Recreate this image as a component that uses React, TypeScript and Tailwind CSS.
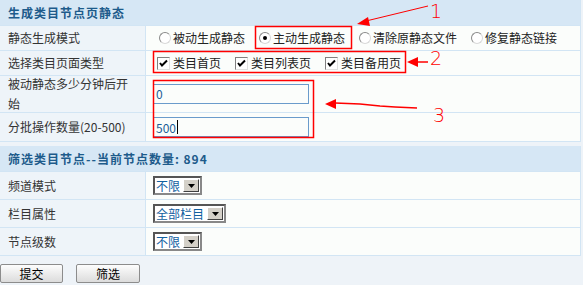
import React from 'react';

const font = { fontFamily: '"Noto Sans CJK SC", "Liberation Sans", sans-serif' };

const Radio = ({ checked, label }: { checked?: boolean; label: string }) => (
  <label className="flex items-center gap-[2px] mr-[14px]">
    <span className="w-[12px] h-[12px] rounded-full bg-white border border-t-[#8a8a8a] border-l-[#8a8a8a] border-r-[#d8d8d8] border-b-[#d8d8d8] flex items-center justify-center">
      {checked && <span className="w-[4px] h-[4px] rounded-full bg-black" />}
    </span>
    <span>{label}</span>
  </label>
);

const Check = ({ label }: { label: string }) => (
  <label className="flex items-center gap-[3px] mr-[14px]">
    <span className="w-[13px] h-[13px] bg-white border border-t-[#808080] border-l-[#808080] border-r-[#e0e0e0] border-b-[#e0e0e0] flex items-center justify-center">
      <svg width="9" height="9" viewBox="0 0 9 9">
        <path d="M1 4 L3 6.5 L8 1.5" stroke="#000" strokeWidth="2" fill="none" />
      </svg>
    </span>
    <span>{label}</span>
  </label>
);

const Select = ({ value, width }: { value: string; width: string }) => (
  <div className={`flex items-stretch h-[19px] border-2 border-t-[#555] border-l-[#555] border-r-[#888] border-b-[#888] bg-white ${width}`}>
    <span className="flex-1 pl-[1px] text-[#11609f] leading-[15px]">{value}</span>
    <span className="w-[16px] m-[1px] bg-[#d4d0c8] border border-t-white border-l-white border-r-[#404040] border-b-[#404040] flex items-center justify-center">
      <svg width="7" height="4" viewBox="0 0 7 4"><path d="M0 0 H7 L3.5 4 Z" fill="#000" /></svg>
    </span>
  </div>
);

const Row = ({ label, h, children }: { label: React.ReactNode; h: string; children?: React.ReactNode }) => (
  <div className={`flex border-b border-[#d2e5f4] ${h}`}>
    <div className="w-[146px] shrink-0 bg-[#eef4f9] border-r border-[#d2e5f4] pl-[8px] pr-[8px] flex items-center text-[#333] leading-[20px]">
      {label}
    </div>
    <div className="flex-1 bg-[#fbfdfb] flex items-center">{children}</div>
  </div>
);

const Header = ({ children }: { children: React.ReactNode }) => (
  <div className="h-[26px] bg-[#d6e7f5] border-b border-[#d2e5f4] pl-[8px] flex items-center font-bold text-[#1d5b8b] tracking-[1px]">
    {children}
  </div>
);

export default function App() {
  return (
    <div className="relative w-[583px] h-[285px] bg-[#eef3f8] text-[12px] text-[#222]" style={font}>
      <div className="w-[581px] border-r border-[#d2e5f4]">
        <Header>生成类目节点页静态</Header>
        <Row label="静态生成模式" h="h-[25px]">
          <div className="flex items-center pl-[13px]">
            <Radio label="被动生成静态" />
            <Radio checked label="主动生成静态" />
            <Radio label="清除原静态文件" />
            <Radio label="修复静态链接" />
          </div>
        </Row>
        <Row label="选择类目页面类型" h="h-[25px]">
          <div className="flex items-center pl-[11px]">
            <Check label="类目首页" />
            <Check label="类目列表页" />
            <Check label="类目备用页" />
          </div>
        </Row>
        <Row label="被动静态多少分钟后开始" h="h-[37px]">
          <div className="ml-[7px] w-[156px] h-[20px] border-[1.5px] border-[#6a9bcb] bg-[#fbfdfb] text-[#1b5e96] pl-[2px] leading-[17px]">0</div>
        </Row>
        <Row label="分批操作数量(20-500)" h="h-[29px]">
          <div className="ml-[7px] w-[156px] h-[20px] border-[1.5px] border-[#6a9bcb] bg-[#fbfdfb] text-[#1b5e96] pl-[2px] leading-[17px] flex items-center">
            500<span className="inline-block w-px h-[14px] bg-black ml-[1px]" />
          </div>
        </Row>
      </div>

      <div className="w-[581px] mt-[4px] border-r border-[#d2e5f4]">
        <Header>筛选类目节点--当前节点数量: 894</Header>
        <Row label="频道模式" h="h-[28px]">
          <div className="ml-[7px]"><Select value="不限" width="w-[49px]" /></div>
        </Row>
        <Row label="栏目属性" h="h-[28px]">
          <div className="ml-[7px]"><Select value="全部栏目" width="w-[73px]" /></div>
        </Row>
        <Row label="节点级数" h="h-[28px]">
          <div className="ml-[7px]"><Select value="不限" width="w-[49px]" /></div>
        </Row>
      </div>

      <div className="flex gap-[13px] mt-[8px]">
        <button className="w-[63px] h-[19px] rounded-[2px] border border-[#8c8c8c] bg-gradient-to-b from-[#fdfdfd] to-[#dcdcdc] text-black leading-[17px]">提交</button>
        <button className="w-[64px] h-[19px] rounded-[2px] border border-[#8c8c8c] bg-gradient-to-b from-[#fdfdfd] to-[#dcdcdc] text-black leading-[17px]">筛选</button>
      </div>

      <svg className="absolute inset-0 pointer-events-none" width="583" height="285">
        <g fill="none" stroke="#ff0000" strokeWidth="1.5">
          <rect x="255.5" y="26.5" width="96" height="22" />
          <rect x="153.5" y="51.5" width="252" height="21" />
          <rect x="153.5" y="80.5" width="160" height="57" />
          <line x1="428" y1="6" x2="366" y2="21" strokeWidth="1" />
          <line x1="416" y1="62" x2="428" y2="62" strokeWidth="1.5" />
          <polyline points="335,103 360,104 380,106 395,107 417,108" strokeWidth="1.5" />
        </g>
        <g fill="#ff0000">
          <polygon points="357,24 368,17 370,26" />
          <polygon points="407,62 418,57 418,67" />
          <polygon points="325,104 336,99 336,109" />
        </g>
        <g fill="#ff0000" style={{ fontFamily: '"DejaVu Sans", sans-serif', fontWeight: 200 }} fontSize="19">
          <text x="430" y="18">1</text>
          <text x="430" y="65">2</text>
          <text x="433" y="122">3</text>
        </g>
      </svg>
    </div>
  );
}
